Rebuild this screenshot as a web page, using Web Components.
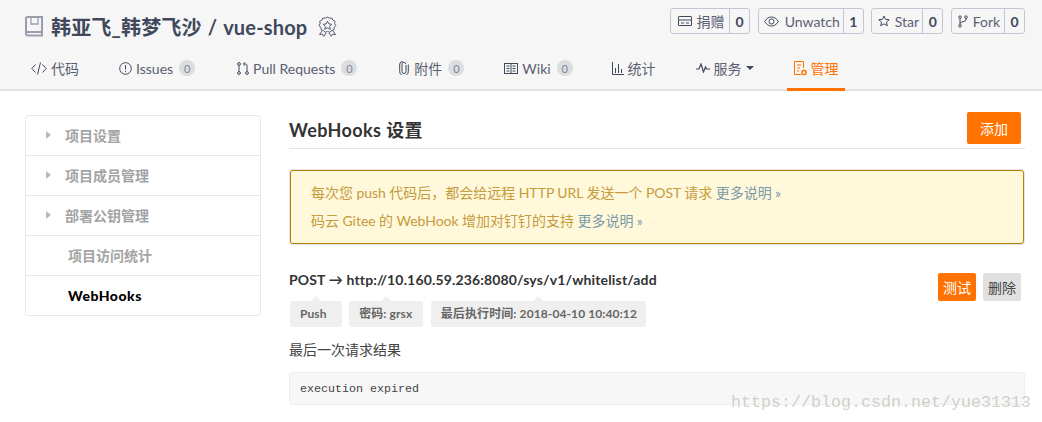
<!DOCTYPE html>
<html>
<head>
<meta charset="utf-8">
<title>WebHooks</title>
<style>
  html, body { margin: 0; background: #fff; }
  body { font-family: Lato, "Noto Sans CJK SC", sans-serif; color: #40485b; width: 1042px; height: 422px; overflow: hidden; position: relative; }
  notice-box a { color: #7a9aa8; }
</style>
</head>
<body>
<repo-header>
  <repo-title slot="title">韩亚飞_韩梦飞沙 / vue-shop</repo-title>
  <count-button slot="actions" icon="donate" count="0" width="80">捐赠</count-button>
  <count-button slot="actions" icon="eye" count="1" width="106">Unwatch</count-button>
  <count-button slot="actions" icon="star" count="0" width="72">Star</count-button>
  <count-button slot="actions" icon="fork" count="0" width="74">Fork</count-button>
  <nav-tab slot="tabs" icon="code">代码</nav-tab>
  <nav-tab slot="tabs" icon="issue" count="0" style="margin-left:-1px">Issues</nav-tab>
  <nav-tab slot="tabs" icon="pr" count="0" style="margin-left:1px">Pull Requests</nav-tab>
  <nav-tab slot="tabs" icon="clip" count="0" style="margin-left:1px">附件</nav-tab>
  <nav-tab slot="tabs" icon="book" count="0" style="margin-left:-1px">Wiki</nav-tab>
  <nav-tab slot="tabs" icon="chart" style="margin-left:-2px">统计</nav-tab>
  <nav-tab slot="tabs" icon="pulse" caret style="margin-left:-1px">服务</nav-tab>
  <nav-tab slot="tabs" icon="manage" active style="margin-left:-2px">管理</nav-tab>
</repo-header>
<page-body>
  <side-menu slot="side">
    <side-item arrow>项目设置</side-item>
    <side-item arrow>项目成员管理</side-item>
    <side-item arrow>部署公钥管理</side-item>
    <side-item>项目访问统计</side-item>
    <side-item active>WebHooks</side-item>
  </side-menu>
  <section-head>WebHooks 设置<app-button slot="action" kind="primary" size="big">添加</app-button></section-head>
  <notice-box>
    <div>每次您 push 代码后，都会给远程 HTTP URL 发送一个 POST 请求 <a>更多说明 »</a></div>
    <div>码云 Gitee 的 WebHook 增加对钉钉的支持 <a>更多说明 »</a></div>
  </notice-box>
  <hook-item url="POST → http://10.160.59.236:8080/sys/v1/whitelist/add">
    <app-button slot="action" kind="primary">测试</app-button>
    <app-button slot="action" kind="plain">删除</app-button>
    <tip-label slot="labels" style="padding-right:15px">Push</tip-label>
    <tip-label slot="labels" style="padding-right:11px">密码: grsx</tip-label>
    <tip-label slot="labels" style="padding-right:9px">最后执行时间: 2018-04-10 10:40:12</tip-label>
    <span slot="caption">最后一次请求结果</span>
    <span slot="result">execution expired</span>
  </hook-item>
</page-body>
<water-mark>https://blog.csdn.net/yue31313</water-mark>

<script>
const ICONS = {
  repo: '<svg width="18" height="21" viewBox="0 0 18 21" fill="none" stroke="#9a9dab" stroke-width="2"><path d="M1 16V2.500A1.500 1.500 0 0 1 2.500 1H17V19.500H3A2 2 0 0 1 1 17.500Z"/><path d="M1.500 16H17"/><path d="M6 1v7h7V1" stroke-width="1.300"/></svg>',
  medal: '<svg width="19" height="21" viewBox="0 0 19 21" fill="none" stroke="#555a6c" stroke-width="1"><path d="M9.500 1l2 1.200 2.400-.2 1 2.200 2.100 1.100-.4 2.400 1.200 2-1.600 1.800-.2 2.400-2.400.6-1.500 1.800-2.600-.8-2.300.8-1.600-1.800-2.400-.6-.2-2.400L.9 9.700l1.200-2-.4-2.400 2.100-1.100 1-2.200 2.400.2z"/><path d="M9.500 5.200l1.300 2.700 3 .4-2.200 2 .6 3-2.700-1.500-2.700 1.500.6-3-2.200-2 3-.4z"/><path d="M4 15l-2.500 3.500 3-.2 1.200 2L8 17M15 15l2.500 3.500-3-.2-1.200 2L11 17"/></svg>',
  donate: '<svg width="14" height="12" viewBox="0 0 14 12" fill="none" stroke="#40485b"><rect x=".5" y="1.500" width="13" height="9" rx=".5"/><path d="M.5 5h13M3 8h3M8 8h3"/></svg>',
  eye: '<svg width="16" height="11" viewBox="0 0 16 11" fill="none" stroke="#40485b"><path d="M.7 5.500C2.500 2.300 5 1 7.500 1s5 1.300 6.800 4.500C12.500 8.700 10 10 7.500 10S2.500 8.700.7 5.500Z"/><circle cx="7.500" cy="5.500" r="2.500"/></svg>',
  star: '<svg width="12" height="12" viewBox="0 0 12 12" fill="none" stroke="#40485b"><path d="M6 1l1.500 3.300 3.700.4-2.700 2.400.8 3.600L6 8.900l-3.300 1.800.8-3.600L.8 4.700l3.700-.4z"/></svg>',
  fork: '<svg width="10" height="13" viewBox="0 0 10 13" fill="none" stroke="#40485b"><circle cx="2" cy="2.200" r="1.300"/><circle cx="8" cy="2.200" r="1.300"/><circle cx="2" cy="10.800" r="1.300"/><path d="M2 3.500v6M8 3.500V5C8 7 2 6.500 2 8.500"/></svg>',
  code: '<svg width="16" height="13" viewBox="0 0 16 13" fill="none" stroke="#40485b"><path d="M4.500 2.500L.8 6.500l3.700 4M11.500 2.500l3.700 4-3.700 4M9.500.5l-3 12"/></svg>',
  issue: '<svg width="13" height="13" viewBox="0 0 13 13" fill="none" stroke="#40485b"><circle cx="6.500" cy="6.500" r="5.800"/><path d="M6.500 3v4.500M6.500 8.800v1.400"/></svg>',
  pr: '<svg width="12" height="13" viewBox="0 0 12 13" fill="none" stroke="#40485b"><circle cx="2" cy="2" r="1.400"/><circle cx="2" cy="11" r="1.400"/><circle cx="10" cy="11" r="1.400"/><path d="M2 3.400v6.200M10 9.600V3.500Q10 2 8.500 2H6.500M8 .3L6.300 2 8 3.700"/></svg>',
  clip: '<svg width="11" height="14" viewBox="0 0 11 14" fill="none" stroke="#40485b"><path d="M7 4v6.500a2 2 0 0 1-4 0V3a1.800 1.800 0 0 1 3.600 0"/><path d="M9.300 3.500v7a4.300 4.300 0 0 1-8.600 0V3a3 3 0 0 1 3-2.500"/></svg>',
  book: '<svg width="14" height="11" viewBox="0 0 14 11" fill="none" stroke="#40485b"><rect x=".5" y=".5" width="13" height="10"/><path d="M7 .5v10M2.500 3h3M2.500 5.500h3M2.500 8h3M8.500 3h3M8.500 5.500h3M8.500 8h3"/></svg>',
  chart: '<svg width="12" height="13" viewBox="0 0 12 13" fill="none" stroke="#40485b"><path d="M.5 0v12.500H12M3.500 6v5M6.500 2v9M9.500 7v4"/></svg>',
  pulse: '<svg width="14" height="10" viewBox="0 0 14 10" fill="none" stroke="#40485b" stroke-width="1.200"><path d="M0 6h3l2-5 2.500 8L9.500 4l1 2H14"/></svg>',
  manage: '<svg width="14" height="15" viewBox="0 0 14 15" fill="none" stroke="#ff7200"><path d="M8 13.500H1.500V.5h9V7M4 4h4M4 7h3M4 10h2"/><rect x="9" y="9.500" width="4" height="4" rx="1.500" stroke-width="1.500"/></svg>'
};

class RepoHeader extends HTMLElement {
  connectedCallback() {
    this.attachShadow({ mode: 'open' });
    this.shadowRoot.innerHTML = `
      <style>
        :host { display: block; height: 89px; background: #f6f6f6; border-bottom: 2px solid #e3e3e3; padding: 0 17px 0 25px; }
        .top { display: flex; justify-content: space-between; height: 50px; }
        .actions { display: flex; gap: 7.67px; padding-top: 8px; }
        .tabs { display: flex; gap: 29px; height: 39px; }
      </style>
      <div class="top"><slot name="title"></slot><div class="actions"><slot name="actions"></slot></div></div>
      <div class="tabs"><slot name="tabs"></slot></div>
    `;
  }
}

class RepoTitle extends HTMLElement {
  connectedCallback() {
    this.attachShadow({ mode: 'open' });
    this.shadowRoot.innerHTML = `
      <style>
        :host { display: flex; align-items: center; height: 52px; font-size: 20px; font-weight: 700; color: #40485b; }
        .t { margin: 0 11px 0 8px; word-spacing: 1px; letter-spacing: .16px; }
        svg { display: block; }
      </style>
      ${ICONS.repo}<span class="t"><slot></slot></span>${ICONS.medal}
    `;
  }
}

class CountButton extends HTMLElement {
  connectedCallback() {
    this.attachShadow({ mode: 'open' });
    this.shadowRoot.innerHTML = `
      <style>
        :host { display: flex; box-sizing: border-box; height: 26px; width: ${this.getAttribute('width')}px; border: 1px solid #c5c6d3; border-radius: 3px; font-size: 14px; color: #5a6072; }
        .main { flex: 1; display: flex; align-items: center; justify-content: center; gap: 5px; padding-left: 2px; }
        .num { width: 19px; border-left: 1px solid #c5c6d3; display: flex; align-items: center; justify-content: center; font-weight: 700; color: #40485b; }
        svg { display: block; }
      </style>
      <div class="main">${ICONS[this.getAttribute('icon')]}<slot></slot></div>
      <div class="num">${this.getAttribute('count')}</div>
    `;
  }
}

class NavTab extends HTMLElement {
  connectedCallback() {
    const active = this.hasAttribute('active');
    const count = this.getAttribute('count');
    this.attachShadow({ mode: 'open' });
    this.shadowRoot.innerHTML = `
      <style>
        :host { display: flex; align-items: center; gap: 4px; height: 41px; padding: 0 6px 2px; box-sizing: border-box; font-size: 14px; color: ${active ? '#ff7200' : '#5a6072'}; border-bottom: 3px solid ${active ? '#ff7200' : 'transparent'}; }
        .n { width: 16px; height: 16px; border-radius: 50%; background: #dcdde1; color: #7d8396; font-size: 11px; display: flex; align-items: center; justify-content: center; margin-left: 2px; }
        .c { width: 0; height: 0; border: 4px solid transparent; border-top-color: #40485b; border-bottom: 0; }
        svg { display: block; }
      </style>
      ${ICONS[this.getAttribute('icon')]}<span><slot></slot></span>
      ${count !== null ? `<span class="n">${count}</span>` : ''}
      ${this.hasAttribute('caret') ? '<span class="c"></span>' : ''}
    `;
  }
}

class PageBody extends HTMLElement {
  connectedCallback() {
    this.attachShadow({ mode: 'open' });
    this.shadowRoot.innerHTML = `
      <style>
        :host { display: grid; grid-template-columns: 236px 736px; column-gap: 28px; padding: 24px 17px 0 25px; }
        .main { min-width: 0; }
      </style>
      <div><slot name="side"></slot></div>
      <div class="main"><slot></slot></div>
    `;
  }
}

class SideMenu extends HTMLElement {
  connectedCallback() {
    this.attachShadow({ mode: 'open' });
    this.shadowRoot.innerHTML = `
      <style>
        :host { display: block; box-sizing: border-box; height: 201px; border: 1px solid #e4e8ec; border-radius: 4px; }
      </style>
      <slot></slot>
    `;
  }
}

class SideItem extends HTMLElement {
  connectedCallback() {
    const active = this.hasAttribute('active');
    const arrow = this.hasAttribute('arrow');
    this.attachShadow({ mode: 'open' });
    this.shadowRoot.innerHTML = `
      <style>
        :host { display: flex; align-items: center; box-sizing: border-box; height: 40px; padding: 0 0 ${active ? 0 : 2}px ${arrow ? 20 : 42}px; font-size: 14px; font-weight: ${active ? 900 : 700}; letter-spacing: ${active ? .5 : 0}px; color: ${active ? '#000' : '#a3a3a3'}; border-bottom: 1px solid #e4e8ec; }
        :host(:last-child) { border-bottom: 0; height: 39px; }
        .a { width: 0; height: 0; border: 4px solid transparent; border-left: 5px solid #b9b9b9; border-right: 0; margin-right: 14px; }
      </style>
      ${arrow ? '<span class="a"></span>' : ''}<slot></slot>
    `;
  }
}

class SectionHead extends HTMLElement {
  connectedCallback() {
    this.attachShadow({ mode: 'open' });
    this.shadowRoot.innerHTML = `
      <style>
        :host { display: flex; justify-content: space-between; align-items: flex-start; height: 36px; padding: 0 4px 0 0; margin-top: -3px; border-bottom: 1px solid #e3e3e3; font-size: 18px; font-weight: 700; color: #333; }
        .t { padding-top: 3px; line-height: 30px; letter-spacing: .4px; }
        ::slotted(app-button) { letter-spacing: 0; }
      </style>
      <span class="t"><slot></slot></span><slot name="action"></slot>
    `;
  }
}

class AppButton extends HTMLElement {
  connectedCallback() {
    const primary = this.getAttribute('kind') === 'primary';
    const big = this.getAttribute('size') === 'big';
    this.attachShadow({ mode: 'open' });
    this.shadowRoot.innerHTML = `
      <style>
        :host { display: flex; align-items: center; justify-content: center; height: ${big ? 32 : 28}px; width: ${big ? 54 : 38}px; border-radius: 2px; font-size: 14px; font-weight: 400; background: ${primary ? '#ff7200' : '#e0e0e0'}; color: ${primary ? '#fff' : '#444'}; }
      </style>
      <slot></slot>
    `;
  }
}

class NoticeBox extends HTMLElement {
  connectedCallback() {
    this.attachShadow({ mode: 'open' });
    this.shadowRoot.innerHTML = `
      <style>
        :host { display: block; box-sizing: border-box; margin: 21px 1px 0; height: 74px; padding: 8px 20px; border: 1px solid #b58105; border-radius: 3px; background: #fff8db; color: #c59b3c; font-size: 14px; line-height: 28px; word-spacing: -.2px; box-shadow: 0 0 0 1px #e4e4e4; }
        ::slotted(div) { height: 28px; }
      </style>
      <slot></slot>
    `;
  }
}

class HookItem extends HTMLElement {
  connectedCallback() {
    this.attachShadow({ mode: 'open' });
    this.shadowRoot.innerHTML = `
      <style>
        :host { display: block; margin-top: 29px; }
        .row { display: flex; justify-content: space-between; padding-right: 4px; height: 28px; }
        .url { font-size: 14px; font-weight: 700; color: #333; line-height: 14px; letter-spacing: .15px; }
        .acts { display: flex; gap: 7px; }
        .labels { display: flex; gap: 7.5px; margin: 0 0 0 1px; }
        .cap { font-size: 14px; color: #444; margin-top: 14px; line-height: 18px; }
        pre { margin: 13px 0 0; box-sizing: border-box; height: 33px; padding: 0 10px; background: #f7f7f7; border: 1px solid #eee; border-radius: 3px; font: 11.67px/33px "Liberation Mono", monospace; color: #444; }
      </style>
      <div class="row"><div class="url">${this.getAttribute('url')}</div><div class="acts"><slot name="action"></slot></div></div>
      <div class="labels"><slot name="labels"></slot></div>
      <div class="cap"><slot name="caption"></slot></div>
      <pre><slot name="result"></slot></pre>
    `;
  }
}

class TipLabel extends HTMLElement {
  connectedCallback() {
    this.attachShadow({ mode: 'open' });
    this.shadowRoot.innerHTML = `
      <style>
        :host { display: block; position: relative; height: 26px; line-height: 26px; padding: 0 10px; background: #efefef; border-radius: 3px; font-size: 12px; font-weight: 700; letter-spacing: .1px; color: #666; }
        :host::before { content: ''; position: absolute; left: 50%; top: -5px; margin-left: -5px; border: 5px solid transparent; border-top: 0; border-bottom-color: #efefef; }
      </style>
      <slot></slot>
    `;
  }
}

class WaterMark extends HTMLElement {
  connectedCallback() {
    this.attachShadow({ mode: 'open' });
    this.shadowRoot.innerHTML = `
      <style>
        :host { position: absolute; left: 731px; top: 393px; font: 16.67px/20px "Liberation Mono", monospace; color: rgba(190, 190, 180, .7); }
      </style>
      <slot></slot>
    `;
  }
}

customElements.define('repo-header', RepoHeader);
customElements.define('repo-title', RepoTitle);
customElements.define('count-button', CountButton);
customElements.define('nav-tab', NavTab);
customElements.define('page-body', PageBody);
customElements.define('side-menu', SideMenu);
customElements.define('side-item', SideItem);
customElements.define('section-head', SectionHead);
customElements.define('app-button', AppButton);
customElements.define('notice-box', NoticeBox);
customElements.define('hook-item', HookItem);
customElements.define('tip-label', TipLabel);
customElements.define('water-mark', WaterMark);
</script>
</body>
</html>
